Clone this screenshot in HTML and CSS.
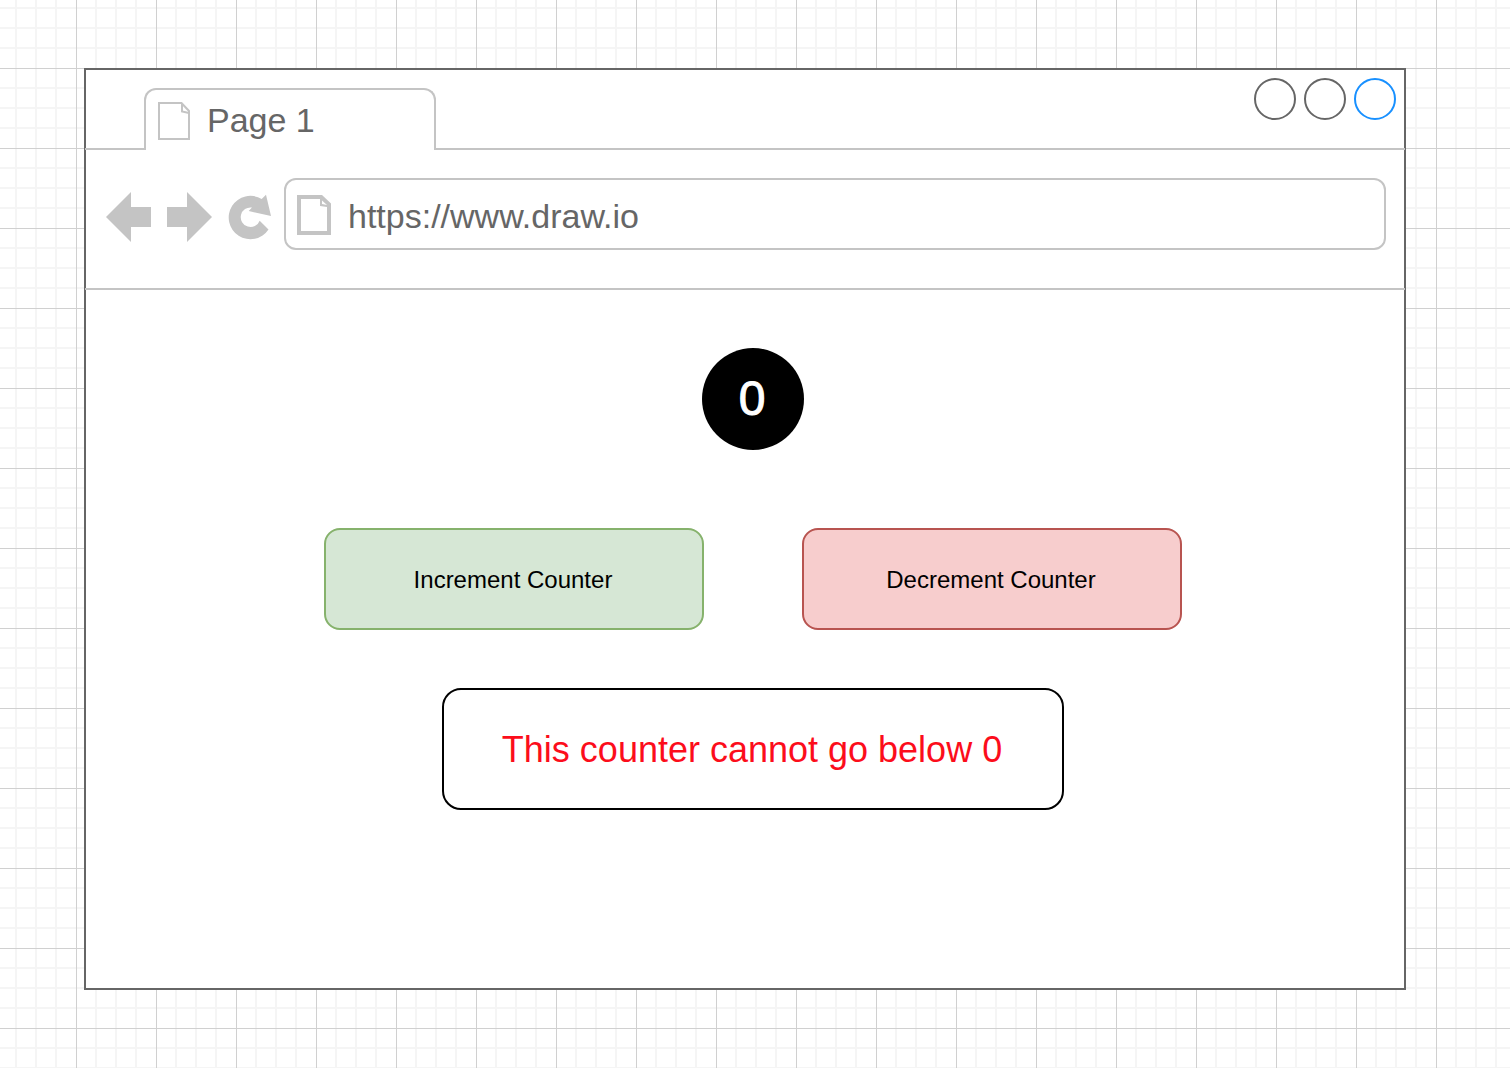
FILE: index.html
```html
<!DOCTYPE html>
<html lang="en">
<head>
  <meta charset="utf-8">
  <meta name="viewport" content="width=device-width, initial-scale=1">
  <title>Counter</title>
  <link rel="stylesheet" href="styles.css">
</head>
<body>
  <div class="browser">
    <header class="tabs">
      <div class="tab">
        <svg width="32" height="38" viewBox="0 0 32 38" fill="none" stroke="currentColor" stroke-width="2" aria-hidden="true">
          <path d="M1 1H23.500L31 9V37H1Z"/>
          <path d="M24 1V9.500L31 11"/>
        </svg>
        <span class="tab-title">Page 1</span>
      </div>
      <div class="controls">
        <button class="control" type="button" aria-label="Minimize"></button>
        <button class="control" type="button" aria-label="Maximize"></button>
        <button class="control control-close" type="button" aria-label="Close"></button>
      </div>
    </header>

    <div class="toolbar">
      <nav class="nav" aria-label="History">
        <button class="nav-button" type="button" aria-label="Back">
          <svg width="45" height="50" viewBox="0 0 45 50" fill="currentColor"><path d="M0 25L25 0V15H45V35H25V50Z"/></svg>
        </button>
        <button class="nav-button" type="button" aria-label="Forward">
          <svg width="45" height="50" viewBox="0 0 45 50" fill="currentColor"><path d="M45 25L20 0V15H0V35H20V50Z"/></svg>
        </button>
        <button class="nav-button" type="button" aria-label="Reload">
          <svg width="43" height="46" viewBox="0 0 43 46" fill="currentColor"><path d="M40.500 35.500A21.700 21.700 0 1 1 33.700 5L38 .7L43 22L20.700 17L24 13.500A9.800 9.800 0 1 0 31.700 26.700Z"/></svg>
        </button>
      </nav>
      <div class="address">
        <svg width="34" height="40" viewBox="0 0 34 40" fill="currentColor" fill-rule="evenodd" aria-hidden="true">
          <path d="M0 0H25L34 8.500V40H0ZM4 4V36H30V12L23 11V4ZM25 5.500V9L30 10Z"/>
        </svg>
        <input class="url" type="text" aria-label="Address" value="https://www.draw.io" spellcheck="false">
      </div>
    </div>

    <main class="content">
      <output class="count">0</output>
      <div class="actions">
        <button class="action increment" type="button">Increment Counter</button>
        <button class="action decrement" type="button">Decrement Counter</button>
      </div>
      <p class="message" role="alert">This counter cannot go below 0</p>
    </main>
  </div>
</body>
</html>
```

FILE: styles.css
```css
* {
  box-sizing: border-box;
}

:root {
  --minor: #f5f5f5;
  --major: #d0d0d0;
  --line: #c4c4c4;
  --ink: #666;
}

body {
  margin: 0;
  padding: 68px 104px 78px 84px;
  font-family: "Liberation Sans", Arial, sans-serif;
  background-color: #fff;
  background-image:
    linear-gradient(to right, var(--major) 1px, transparent 1px),
    linear-gradient(to bottom, var(--major) 1px, transparent 1px),
    linear-gradient(to right, transparent 19px, var(--minor) 19px 21px, transparent 21px 39px, var(--minor) 39px 41px, transparent 41px 59px, var(--minor) 59px 61px, transparent 61px),
    linear-gradient(to bottom, transparent 19px, var(--minor) 19px 21px, transparent 21px 39px, var(--minor) 39px 41px, transparent 41px 59px, var(--minor) 59px 61px, transparent 61px);
  background-size: 80px 80px;
  background-position: 76px 68px;
}

button {
  padding: 0;
  font: inherit;
  cursor: pointer;
}

svg {
  display: block;
  flex: none;
}

.browser {
  border: 2px solid var(--ink);
  background: #fff;
}

/* Both bars reach onto the window frame by one pixel. */
.tabs,
.toolbar {
  display: flex;
  margin: 0 -1px;
  border-bottom: 2px solid var(--line);
}

.tabs {
  justify-content: space-between;
  padding: 0 9px 0 59px;
}

.tab {
  display: flex;
  gap: 17px;
  width: 292px;
  margin: 18px 0 -2px;
  padding: 12px 12px 10px;
  border: 2px solid var(--line);
  border-bottom: 0;
  border-radius: 12px 12px 0 0;
  background: #fff;
  color: var(--line);
}

.tab-title {
  color: var(--ink);
  font-size: 34px;
  line-height: 36px;
}

.controls {
  display: flex;
  gap: 8px;
  padding-top: 8px;
}

.control {
  width: 42px;
  height: 42px;
  border: 2px solid var(--ink);
  border-radius: 50%;
  background: #fff;
}

.control-close {
  border-color: #1890ff;
}

.toolbar {
  align-items: center;
  gap: 13px;
  padding: 28px 19px 38px 21px;
}

.nav {
  display: flex;
  align-items: center;
  gap: 16px;
  padding-top: 6px;
}

.nav-button {
  border: 0;
  background: none;
  color: var(--line);
}

.address {
  display: flex;
  flex: 1;
  align-items: center;
  gap: 17px;
  min-width: 0;
  height: 72px;
  padding: 2px 12px 0 11px;
  border: 2px solid var(--line);
  border-radius: 12px;
  color: var(--line);
}

.url {
  flex: 1;
  min-width: 0;
  padding: 2px 0 0;
  border: 0;
  outline: 0;
  background: none;
  color: var(--ink);
  font: 34px/38px "Liberation Sans", Arial, sans-serif;
}

.content {
  display: flex;
  flex-direction: column;
  align-items: center;
  padding: 58px 0 178px 16px;
}

.count {
  width: 102px;
  height: 102px;
  padding-right: 2px;
  border-radius: 50%;
  background: #000;
  color: #fff;
  font-size: 48px;
  line-height: 102px;
  text-align: center;
  -webkit-text-stroke: 1px #fff;
}

.actions {
  display: flex;
  flex-wrap: wrap;
  justify-content: center;
  gap: 24px 98px;
  margin: 78px 0 58px;
}

.action {
  width: 380px;
  height: 102px;
  padding: 2px 2px 0 0;
  border: 2px solid;
  border-radius: 16px;
  color: #000;
  font-size: 24px;
}

.increment {
  border-color: #86b26c;
  background: #d6e7d5;
}

.decrement {
  border-color: #b85450;
  background: #f7cdcd;
}

.message {
  width: 622px;
  max-width: 100%;
  margin: 0;
  padding: 39px 58px 37px 56px;
  border: 2px solid #000;
  border-radius: 19px;
  background: #fff;
  color: #fc0d1b;
  font-size: 36px;
  line-height: 42px;
  text-align: center;
}
```
